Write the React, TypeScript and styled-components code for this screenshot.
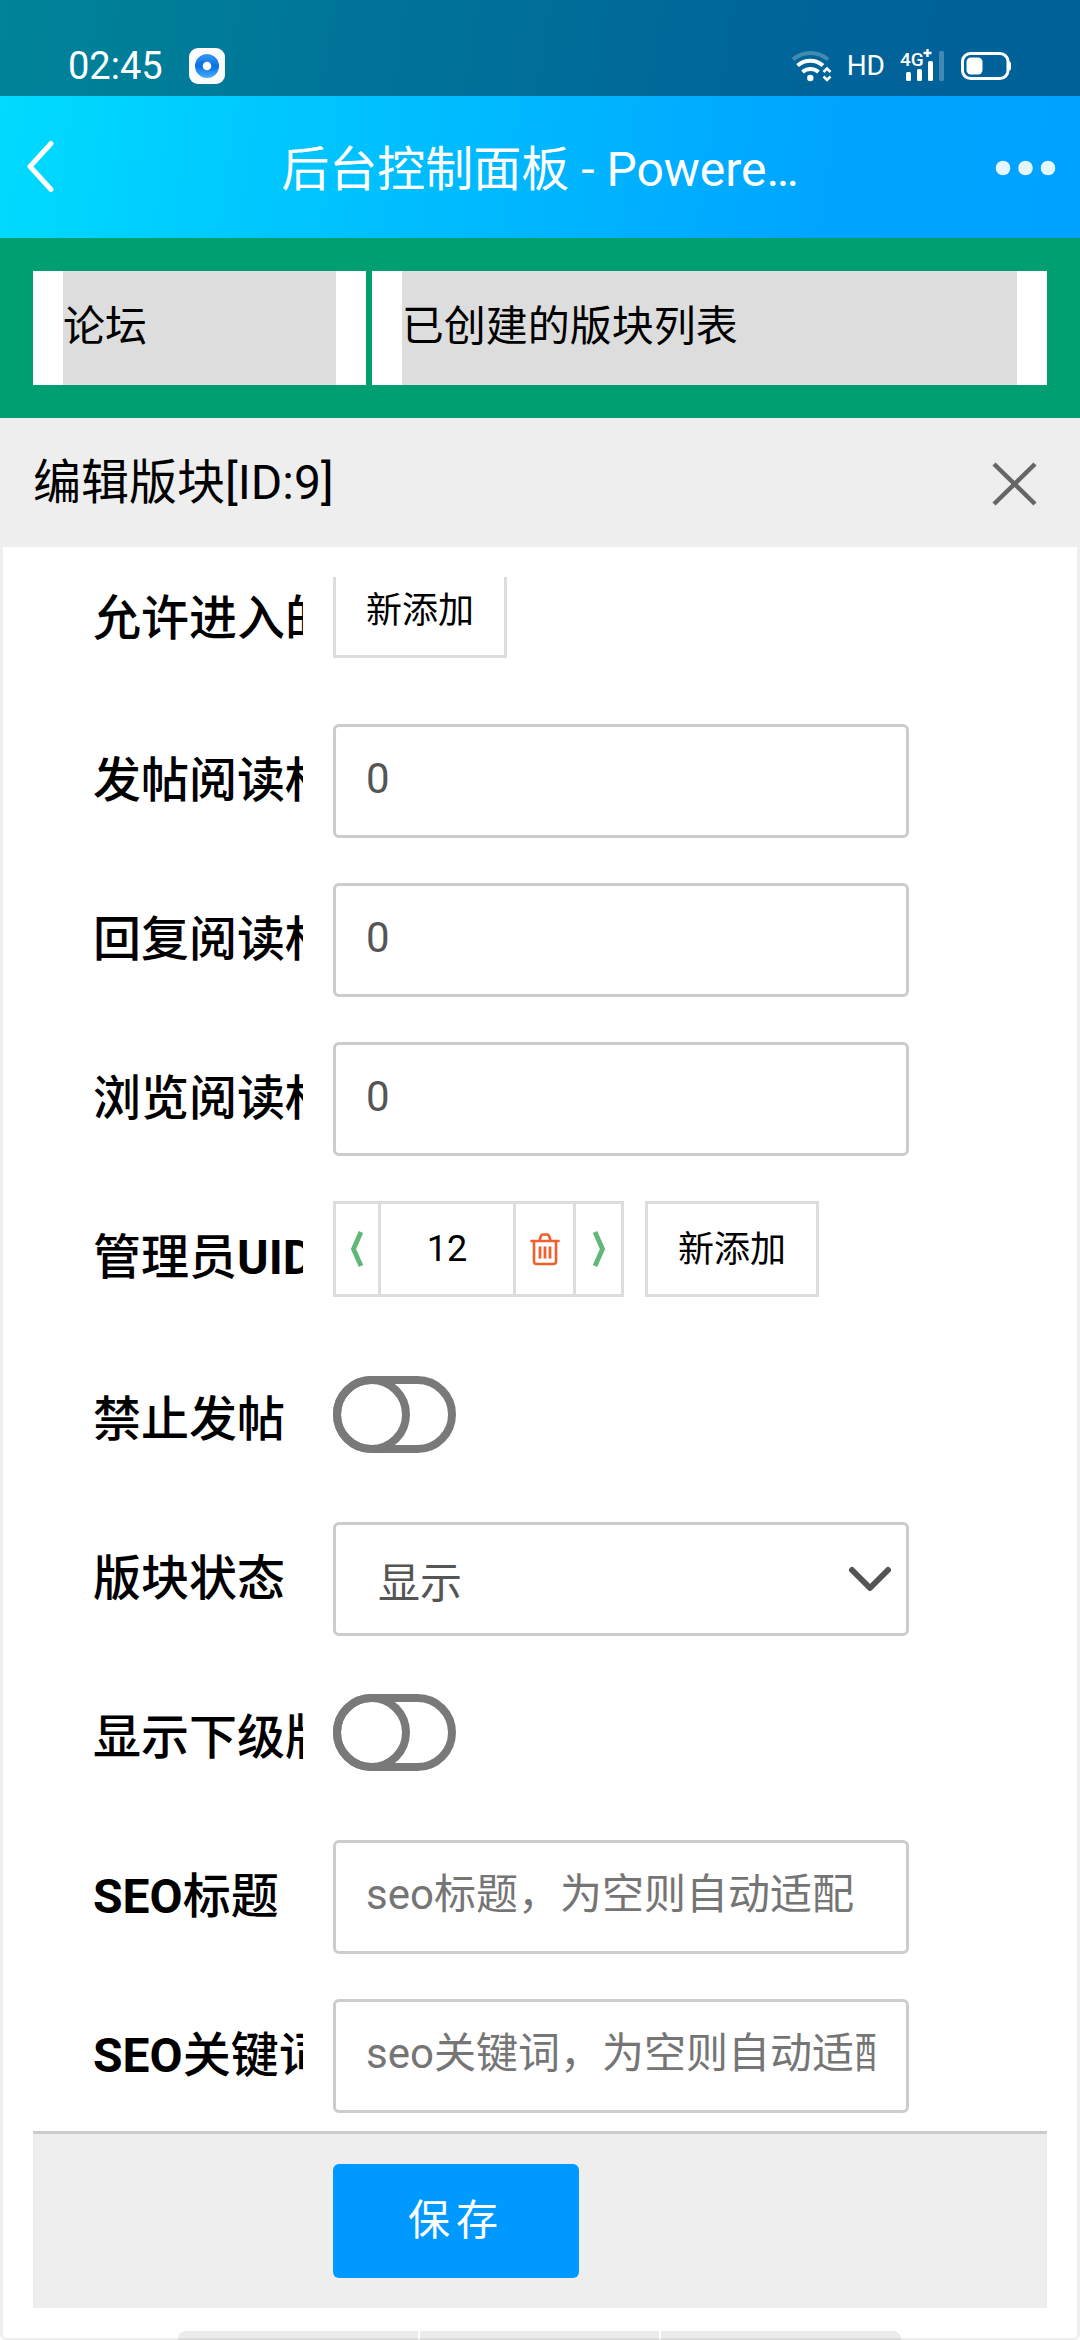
import React, { useLayoutEffect, useRef, useState } from "react";
import styled, { createGlobalStyle } from "styled-components";

const GlobalStyle = createGlobalStyle`
  *, *::before { box-sizing: border-box; }
  body {
    margin: 0;
    background: #fff;
    color: #000;
    font-family: Roboto, "Noto Sans CJK SC", sans-serif;
  }
  button, input, select {
    margin: 0;
    padding: 0;
    border: 0;
    border-radius: 0;
    outline: 0;
    background: none;
    color: inherit;
    font: inherit;
    appearance: none;
  }
  svg { display: block; }
`;

const Page = styled.div`
  display: flex;
  flex-direction: column;
  height: 100vh;
  overflow: hidden;
`;

/* ---------- top area ---------- */

const Top = styled.header`
  flex: none;
  background: linear-gradient(98deg, #00dcff 0%, #00c4ff 30%, #00a5ff 76%, #00a2ff 100%);
  color: #fff;
`;

const StatusBar = styled.div`
  display: flex;
  align-items: flex-end;
  justify-content: space-between;
  height: 96px;
  padding: 0 69px 12px 68px;
  background: rgba(0, 0, 0, 0.4);
`;

const StatusGroup = styled.div<{ $gap: number }>`
  display: flex;
  align-items: center;
  gap: ${(p) => p.$gap}px;
  height: 36px;
`;

const Clock = styled.time`
  font-size: 38px;
  line-height: 36px;
`;

const Hd = styled.span`
  font-size: 28px;
  line-height: 36px;
`;

const NavBar = styled.div`
  display: grid;
  grid-template-columns: 160px 1fr 160px;
  align-items: center;
  height: 142px;
`;

const NavTitle = styled.h1`
  margin: 0;
  padding-top: 6px;
  overflow: hidden;
  font-size: 48px;
  font-weight: 400;
  line-height: 72px;
  text-align: center;
  white-space: nowrap;
`;

const NavButton = styled.button<{ $end?: boolean }>`
  display: flex;
  align-items: center;
  justify-content: ${(p) => (p.$end ? "flex-end" : "flex-start")};
  height: 142px;
  padding: 0 24px;
`;

/* ---------- green selector strip ---------- */

const Strip = styled.nav`
  display: grid;
  flex: none;
  grid-template-columns: minmax(0, 33fr) minmax(0, 67fr);
  gap: 6px;
  padding: 33px;
  background: #009f72;
`;

const StripSelect = styled.select`
  width: 100%;
  height: 114px;
  padding: 0 0 4px;
  border: solid #fff;
  border-width: 0 30px;
  background: #ddd;
  font-size: 42px;
`;

/* ---------- dialog ---------- */

const DialogHead = styled.div`
  display: flex;
  flex: none;
  align-items: center;
  justify-content: space-between;
  height: 129px;
  padding: 0 42px 0 33px;
  background: #eee;
`;

const DialogTitle = styled.h2`
  margin: 0;
  font-size: 48px;
  font-weight: 400;
  line-height: 72px;
`;

const Panel = styled.form`
  display: flex;
  flex: 1;
  flex-direction: column;
  min-height: 0;
  padding: 30px;
  border: solid #eee;
  border-width: 0 3px 2px;
  border-radius: 0 0 6px 6px;
`;

const Scroller = styled.div`
  flex: 1;
  min-height: 0;
  overflow-y: auto;
  scrollbar-width: none;
`;

const Row = styled.div`
  display: flex;
  gap: 30px;
  align-items: flex-start;
  padding: 0 138px 45px 60px;
`;

const Label = styled.label`
  flex: none;
  width: 210px;
  overflow: hidden;
  font-size: 48px;
  font-weight: 700;
  line-height: 114px;
  white-space: nowrap;

  span { font-weight: 500; }
`;

const Field = styled.div`
  position: relative;
  display: flex;
  flex: 1;
  gap: 21px;
  min-width: 0;
`;

const TextInput = styled.input`
  width: 100%;
  height: 114px;
  padding: 0 30px 6px;
  border: 3px solid #ccc;
  border-radius: 6px;
  color: #555;
  font-size: 42px;

  &::placeholder { color: #757575; opacity: 1; }
`;

const Select = styled.select`
  width: 100%;
  height: 114px;
  padding: 8px 90px 0 42px;
  border: 3px solid #ccc;
  border-radius: 6px;
  color: #555;
  font-size: 42px;
`;

const Chevron = styled.svg`
  position: absolute;
  top: 42px;
  right: 15px;
  pointer-events: none;
`;

const Outlined = styled.button`
  height: 96px;
  margin-bottom: 21px;
  padding: 0 30px 6px;
  border: 3px solid #ddd;
  font-size: 36px;
`;

const Tag = styled.div`
  display: grid;
  grid-template-columns: 42px 132px 57px 45px;
  gap: 3px;
  height: 96px;
  border: 3px solid #ddd;
  background: #ddd;
`;

const TagButton = styled.button`
  display: flex;
  align-items: center;
  justify-content: center;
  background: #fff;
`;

const TagInput = styled.input`
  width: 100%;
  background: #fff;
  font-size: 36px;
  text-align: center;
`;

const Toggle = styled.input`
  display: flex;
  width: 123px;
  height: 77px;
  margin: 13px 0 24px;
  border: 8px solid #797979;
  border-radius: 39px;

  &::before {
    content: "";
    flex: none;
    width: 77px;
    height: 77px;
    margin: -8px;
    border: 8px solid #797979;
    border-radius: 50%;
  }

  &:checked { justify-content: flex-end; }
`;

const Footer = styled.footer`
  flex: none;
  padding: 30px 30px 30px 300px;
  border-top: 3px solid #ccc;
  background: #eee;
`;

const Save = styled.button`
  display: block;
  height: 114px;
  padding: 0 75px 10px;
  border-radius: 6px;
  background: #09f;
  color: #fff;
  font-size: 42px;
  letter-spacing: 6px;
`;

/* Navigation hints floating over the bottom edge of the screen */
const Hints = styled.div`
  position: fixed;
  right: 179px;
  bottom: 0;
  left: 178px;
  display: grid;
  grid-template-columns: repeat(3, 1fr);
  gap: 2px;
  height: 9px;
  overflow: hidden;
  border-radius: 8px 8px 0 0;

  i { background: rgba(0, 0, 0, 0.08); }
`;

/* ---------- icons ---------- */

const AppIcon = () => (
  <svg width="36" height="36" viewBox="0 0 36 36">
    <defs>
      <linearGradient id="lens" x1="0" y1="0" x2="0" y2="1">
        <stop offset="0" stopColor="#3a97ee" />
        <stop offset="0.5" stopColor="#0a74e6" />
        <stop offset="1" stopColor="#4aaef9" />
      </linearGradient>
    </defs>
    <rect width="36" height="36" rx="9" fill="#fcfcfc" />
    <circle cx="18" cy="18" r="12" fill="url(#lens)" />
    <path d="M6 18c2-6 8-6 12-4 5 2 10 1 12 4-1 5-7 5-12 4-5-2-9-1-12-4z" fill="#0b72e4" opacity="0.7" />
    <circle cx="18" cy="18" r="4.3" fill="#fff" />
  </svg>
);

const WifiIcon = () => (
  <svg width="40" height="32" viewBox="0 0 40 32" fill="none" stroke="#fff" strokeWidth="4">
    <path d="M1 9.5C11 .8 26 .8 36 9.5" opacity="0.25" />
    <path d="M5.5 15.5c7.500-6.500 18-6.500 25.500 0" />
    <path d="M10.500 22c4.500-4 11.500-4 16 0" />
    <circle cx="18.300" cy="28" r="3.200" fill="#fff" stroke="none" />
    <path d="M31.500 22l3.500-3.500 3.500 3.500M31.500 26.500l3.500 3.500 3.500-3.500" strokeWidth="2.600" />
  </svg>
);

const SignalIcon = () => (
  <svg width="46" height="36" viewBox="0 0 46 36" fill="#fff">
    <text x="0" y="18" fontSize="19" fontWeight="500" fontFamily="Roboto, sans-serif">4G</text>
    <path d="M23.500 5h8M27.500 1v8" stroke="#fff" strokeWidth="2.400" />
    <rect x="6" y="24" width="5" height="9" rx="1.500" />
    <rect x="17" y="21" width="5" height="12" rx="1.500" />
    <rect x="28" y="13" width="5" height="20" rx="1.500" />
    <rect x="39" y="3" width="5" height="30" rx="1.500" opacity="0.25" />
  </svg>
);

const BatteryIcon = () => (
  <svg width="50" height="30" viewBox="0 0 50 30">
    <rect x="1.500" y="2.500" width="45.500" height="25" rx="8" fill="none" stroke="#fff" strokeWidth="3" />
    <rect x="5.500" y="6.500" width="16" height="17" rx="4.500" fill="#fff" />
    <path d="M47 10c2.500.5 3.500 2 3.500 5s-1 4.500-3.500 5z" fill="#fff" />
  </svg>
);

const BackIcon = () => (
  <svg width="32" height="54" viewBox="0 0 32 54" fill="none" stroke="#fff" strokeWidth="5" strokeLinecap="round" strokeLinejoin="round">
    <path d="M27 3.500L6 26.500 27 49.500" />
  </svg>
);

const MoreIcon = () => (
  <svg width="62" height="18" viewBox="0 0 62 18" fill="#e4f6ff">
    <circle cx="9" cy="10" r="7.300" />
    <circle cx="31.500" cy="10" r="7.300" />
    <circle cx="54" cy="10" r="7.300" />
  </svg>
);

const CloseIcon = () => (
  <svg width="48" height="48" viewBox="0 0 48 48" fill="none" stroke="#666" strokeWidth="4.500">
    <path d="M4 5l41 40M45 5L4 45" />
  </svg>
);

const AngleIcon = ({ flip }: { flip?: boolean }) => (
  <svg width="14" height="38" viewBox="0 0 14 38" fill="none" stroke="#5fb878" strokeWidth="4.800">
    <path d={flip ? "M3 2l7.500 17L3 36" : "M11 2L3.500 19 11 36"} />
  </svg>
);

const TrashIcon = () => (
  <svg width="30" height="34" viewBox="0 0 30 34" fill="none" stroke="#f05f2c" strokeWidth="2.600">
    <path d="M1.500 9h27" strokeLinecap="round" />
    <path d="M9.500 8l1.500-4q.5-1.500 2-1.500h4q1.500 0 2 1.500l1.500 4" />
    <path d="M4 9v20.500q0 2.500 2.500 2.500h17q2.500 0 2.500-2.500V9" />
    <path d="M10 14.500v12M15 14.500v12M20 14.500v12" strokeWidth="2.800" />
  </svg>
);

/* ---------- form rows ---------- */

type TextRowProps = { id: string; label: React.ReactNode; value?: string; placeholder?: string };

const TextRow = ({ id, label, value = "", placeholder }: TextRowProps) => (
  <Row>
    <Label htmlFor={id}>{label}</Label>
    <Field>
      <TextInput id={id} type="text" defaultValue={value} placeholder={placeholder} />
    </Field>
  </Row>
);

const ToggleRow = ({ id, label }: { id: string; label: string }) => {
  const [on, setOn] = useState(false);
  return (
    <Row>
      <Label htmlFor={id}><span>{label}</span></Label>
      <Field>
        <Toggle id={id} type="checkbox" checked={on} onChange={(e) => setOn(e.target.checked)} />
      </Field>
    </Row>
  );
};

export default function App() {
  const scroller = useRef<HTMLDivElement>(null);

  // The form opens already scrolled a little way down.
  useLayoutEffect(() => {
    if (scroller.current) scroller.current.scrollTop = 15;
  }, []);

  return (
    <Page>
      <GlobalStyle />
      <Top>
        <StatusBar>
          <StatusGroup $gap={26}>
            <Clock>02:45</Clock>
            <AppIcon />
          </StatusGroup>
          <StatusGroup $gap={15}>
            <WifiIcon />
            <Hd>HD</Hd>
            <SignalIcon />
            <BatteryIcon />
          </StatusGroup>
        </StatusBar>
        <NavBar>
          <NavButton type="button"><BackIcon /></NavButton>
          <NavTitle>后台控制面板 - Powere…</NavTitle>
          <NavButton type="button" $end><MoreIcon /></NavButton>
        </NavBar>
      </Top>

      <Strip>
        <StripSelect><option>论坛</option></StripSelect>
        <StripSelect><option>已创建的版块列表</option></StripSelect>
      </Strip>

      <DialogHead>
        <DialogTitle>编辑版块[ID:9]</DialogTitle>
        <button type="button"><CloseIcon /></button>
      </DialogHead>

      <Panel onSubmit={(e) => e.preventDefault()}>
        <Scroller ref={scroller}>
          <Row>
            <Label htmlFor="allow"><span>允许进入的</span></Label>
            <Field><Outlined id="allow" type="button">新添加</Outlined></Field>
          </Row>
          <TextRow id="post" label={<span>发帖阅读权</span>} value="0" />
          <TextRow id="reply" label={<span>回复阅读权</span>} value="0" />
          <TextRow id="view" label={<span>浏览阅读权</span>} value="0" />
          <Row>
            <Label htmlFor="uid"><span>管理员</span>UID</Label>
            <Field>
              <Tag>
                <TagButton type="button"><AngleIcon /></TagButton>
                <TagInput id="uid" type="text" defaultValue="12" />
                <TagButton type="button"><TrashIcon /></TagButton>
                <TagButton type="button"><AngleIcon flip /></TagButton>
              </Tag>
              <Outlined type="button">新添加</Outlined>
            </Field>
          </Row>
          <ToggleRow id="lock" label="禁止发帖" />
          <Row>
            <Label htmlFor="state"><span>版块状态</span></Label>
            <Field>
              <Select id="state"><option>显示</option></Select>
              <Chevron width="48" height="30" viewBox="0 0 48 30" fill="none" stroke="#555" strokeWidth="6" strokeLinecap="round" strokeLinejoin="round">
                <path d="M6 6l18 18L42 6" />
              </Chevron>
            </Field>
          </Row>
          <ToggleRow id="children" label="显示下级版" />
          <TextRow id="seoTitle" label={<>SEO<span>标题</span></>} placeholder="seo标题，为空则自动适配" />
          <TextRow id="seoWords" label={<>SEO<span>关键词</span></>} placeholder="seo关键词，为空则自动适配" />
        </Scroller>
        <Footer>
          <Save type="submit">保存</Save>
        </Footer>
      </Panel>

      <Hints><i /><i /><i /></Hints>
    </Page>
  );
}
